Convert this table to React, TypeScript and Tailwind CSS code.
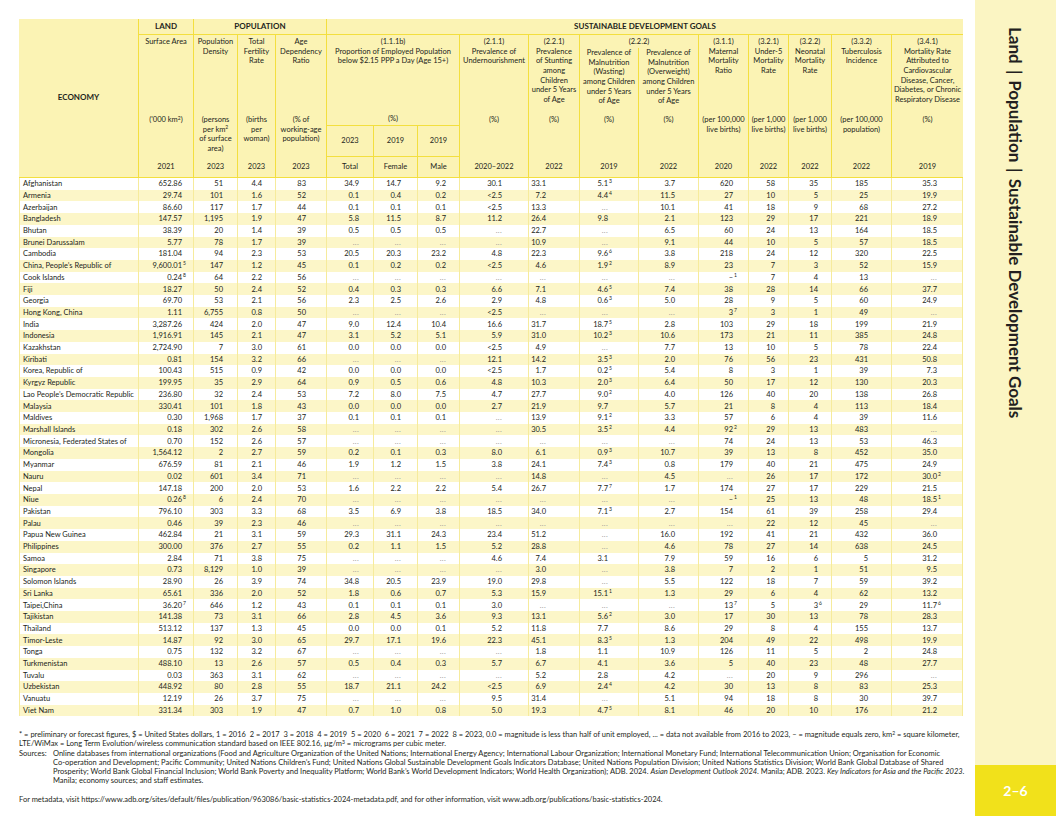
import React from "react";

const GRID =
  "grid grid-cols-[119px_55px_44px_38px_51px_47px_44px_42px_69px_51px_59px_60px_50px_40px_43px_60px_72px]";

const PR = [
  "pl-[3px] justify-start",
  "pr-[11px] justify-end",
  "pr-[14px] justify-end",
  "pr-[13px] justify-end",
  "pr-[20px] justify-end",
  "pr-[14px] justify-end",
  "pr-[16px] justify-end",
  "pr-[13px] justify-end",
  "pr-[26px] justify-end",
  "pr-[33px] justify-end",
  "pr-[30px] justify-end",
  "pr-[23px] justify-end",
  "pr-[15px] justify-end",
  "pr-[13px] justify-end",
  "pr-[13px] justify-end",
  "pr-[23px] justify-end",
  "pr-[25px] justify-end",
];

const E = "...";
const ROWS: string[][] = [
  ["Afghanistan", "652.86", "51", "4.4", "83", "34.9", "14.7", "9.2", "30.1", "33.1", "5.1^3", "3.7", "620", "58", "35", "185", "35.3"],
  ["Armenia", "29.74", "101", "1.6", "52", "0.1", "0.4", "0.2", "<2.5", "7.2", "4.4^4", "11.5", "27", "10", "5", "25", "19.9"],
  ["Azerbaijan", "86.60", "117", "1.7", "44", "0.1", "0.1", "0.1", "<2.5", "13.3", E, "10.1", "41", "18", "9", "68", "27.2"],
  ["Bangladesh", "147.57", "1,195", "1.9", "47", "5.8", "11.5", "8.7", "11.2", "26.4", "9.8", "2.1", "123", "29", "17", "221", "18.9"],
  ["Bhutan", "38.39", "20", "1.4", "39", "0.5", "0.5", "0.5", E, "22.7", E, "6.5", "60", "24", "13", "164", "18.5"],
  ["Brunei Darussalam", "5.77", "78", "1.7", "39", E, E, E, E, "10.9", E, "9.1", "44", "10", "5", "57", "18.5"],
  ["Cambodia", "181.04", "94", "2.3", "53", "20.5", "20.3", "23.2", "4.8", "22.3", "9.6^6", "3.8", "218", "24", "12", "320", "22.5"],
  ["China, People\u2019s Republic of", "9,600.01^5", "147", "1.2", "45", "0.1", "0.2", "0.2", "<2.5", "4.6", "1.9^2", "8.9", "23", "7", "3", "52", "15.9"],
  ["Cook Islands", "0.24^8", "64", "2.2", "56", E, E, E, E, E, E, E, "\u2013^1", "7", "4", "13", E],
  ["Fiji", "18.27", "50", "2.4", "52", "0.4", "0.3", "0.3", "6.6", "7.1", "4.6^5", "7.4", "38", "28", "14", "66", "37.7"],
  ["Georgia", "69.70", "53", "2.1", "56", "2.3", "2.5", "2.6", "2.9", "4.8", "0.6^3", "5.0", "28", "9", "5", "60", "24.9"],
  ["Hong Kong, China", "1.11", "6,755", "0.8", "50", E, E, E, "<2.5", E, E, E, "3^7", "3", "1", "49", E],
  ["India", "3,287.26", "424", "2.0", "47", "9.0", "12.4", "10.4", "16.6", "31.7", "18.7^5", "2.8", "103", "29", "18", "199", "21.9"],
  ["Indonesia", "1,916.91", "145", "2.1", "47", "3.1", "5.2", "5.1", "5.9", "31.0", "10.2^3", "10.6", "173", "21", "11", "385", "24.8"],
  ["Kazakhstan", "2,724.90", "7", "3.0", "61", "0.0", "0.0", "0.0", "<2.5", "4.9", E, "7.7", "13", "10", "5", "78", "22.4"],
  ["Kiribati", "0.81", "154", "3.2", "66", E, E, E, "12.1", "14.2", "3.5^3", "2.0", "76", "56", "23", "431", "50.8"],
  ["Korea, Republic of", "100.43", "515", "0.9", "42", "0.0", "0.0", "0.0", "<2.5", "1.7", "0.2^5", "5.4", "8", "3", "1", "39", "7.3"],
  ["Kyrgyz Republic", "199.95", "35", "2.9", "64", "0.9", "0.5", "0.6", "4.8", "10.3", "2.0^3", "6.4", "50", "17", "12", "130", "20.3"],
  ["Lao People\u2019s Democratic Republic", "236.80", "32", "2.4", "53", "7.2", "8.0", "7.5", "4.7", "27.7", "9.0^2", "4.0", "126", "40", "20", "138", "26.8"],
  ["Malaysia", "330.41", "101", "1.8", "43", "0.0", "0.0", "0.0", "2.7", "21.9", "9.7", "5.7", "21", "8", "4", "113", "18.4"],
  ["Maldives", "0.30", "1,968", "1.7", "37", "0.1", "0.1", "0.1", E, "13.9", "9.1^2", "3.3", "57", "6", "4", "39", "11.6"],
  ["Marshall Islands", "0.18", "302", "2.6", "58", E, E, E, E, "30.5", "3.5^2", "4.4", "92^2", "29", "13", "483", E],
  ["Micronesia, Federated States of", "0.70", "152", "2.6", "57", E, E, E, E, E, E, E, "74", "24", "13", "53", "46.3"],
  ["Mongolia", "1,564.12", "2", "2.7", "59", "0.2", "0.1", "0.3", "8.0", "6.1", "0.9^3", "10.7", "39", "13", "8", "452", "35.0"],
  ["Myanmar", "676.59", "81", "2.1", "46", "1.9", "1.2", "1.5", "3.8", "24.1", "7.4^3", "0.8", "179", "40", "21", "475", "24.9"],
  ["Nauru", "0.02", "601", "3.4", "71", E, E, E, E, "14.8", E, "4.5", E, "26", "17", "172", "30.0^2"],
  ["Nepal", "147.18", "200", "2.0", "53", "1.6", "2.2", "2.2", "5.4", "26.7", "7.7^7", "1.7", "174", "27", "17", "229", "21.5"],
  ["Niue", "0.26^8", "6", "2.4", "70", E, E, E, E, E, E, E, "\u2013^1", "25", "13", "48", "18.5^1"],
  ["Pakistan", "796.10", "303", "3.3", "68", "3.5", "6.9", "3.8", "18.5", "34.0", "7.1^3", "2.7", "154", "61", "39", "258", "29.4"],
  ["Palau", "0.46", "39", "2.3", "46", E, E, E, E, E, E, E, E, "22", "12", "45", E],
  ["Papua New Guinea", "462.84", "21", "3.1", "59", "29.3", "31.1", "24.3", "23.4", "51.2", E, "16.0", "192", "41", "21", "432", "36.0"],
  ["Philippines", "300.00", "376", "2.7", "55", "0.2", "1.1", "1.5", "5.2", "28.8", E, "4.6", "78", "27", "14", "638", "24.5"],
  ["Samoa", "2.84", "71", "3.8", "75", E, E, E, "4.6", "7.4", "3.1", "7.9", "59", "16", "6", "5", "31.2"],
  ["Singapore", "0.73", "8,129", "1.0", "39", E, E, E, E, "3.0", E, "3.8", "7", "2", "1", "51", "9.5"],
  ["Solomon Islands", "28.90", "26", "3.9", "74", "34.8", "20.5", "23.9", "19.0", "29.8", E, "5.5", "122", "18", "7", "59", "39.2"],
  ["Sri Lanka", "65.61", "336", "2.0", "52", "1.8", "0.6", "0.7", "5.3", "15.9", "15.1^1", "1.3", "29", "6", "4", "62", "13.2"],
  ["Taipei,China", "36.20^7", "646", "1.2", "43", "0.1", "0.1", "0.1", "3.0", E, E, E, "13^7", "5", "3^6", "29", "11.7^6"],
  ["Tajikistan", "141.38", "73", "3.1", "66", "2.8", "4.5", "3.6", "9.3", "13.1", "5.6^2", "3.0", "17", "30", "13", "78", "28.3"],
  ["Thailand", "513.12", "137", "1.3", "45", "0.0", "0.0", "0.1", "5.2", "11.8", "7.7", "8.6", "29", "8", "4", "155", "13.7"],
  ["Timor-Leste", "14.87", "92", "3.0", "65", "29.7", "17.1", "19.6", "22.3", "45.1", "8.3^5", "1.3", "204", "49", "22", "498", "19.9"],
  ["Tonga", "0.75", "132", "3.2", "67", E, E, E, E, "1.8", "1.1", "10.9", "126", "11", "5", "2", "24.8"],
  ["Turkmenistan", "488.10", "13", "2.6", "57", "0.5", "0.4", "0.3", "5.7", "6.7", "4.1", "3.6", "5", "40", "23", "48", "27.7"],
  ["Tuvalu", "0.03", "363", "3.1", "62", E, E, E, E, "5.2", "2.8", "4.2", E, "20", "9", "296", E],
  ["Uzbekistan", "448.92", "80", "2.8", "55", "18.7", "21.1", "24.2", "<2.5", "6.9", "2.4^4", "4.2", "30", "13", "8", "83", "25.3"],
  ["Vanuatu", "12.19", "26", "3.7", "75", E, E, E, "9.5", "31.4", E, "5.1", "94", "18", "8", "30", "39.7"],
  ["Viet Nam", "331.34", "303", "1.9", "47", "0.7", "1.0", "0.8", "5.0", "19.3", "4.7^5", "8.1", "46", "20", "10", "176", "21.2"],
];

function Val({ v }: { v: string }) {
  if (v === E) return <span className="text-[#9a9a9a] tracking-[0.3px]">...</span>;
  const [n, s] = v.split("^");
  return (
    <span className="relative">
      {n}
      {s && (
        <span className="absolute left-full top-[1px] pl-[1px] text-[5px] leading-none">{s}</span>
      )}
    </span>
  );
}

const HL = "border-[#f3df3f]";

type HCol = { c: string; title: React.ReactNode; units: React.ReactNode; year: string };

const GENERIC: HCol[] = [
  { c: "col-start-2", title: <>Surface Area</>, units: <>('000 km<sup className="text-[5px]">2</sup>)</>, year: "2021" },
  { c: "col-start-3", title: <>Population<br />Density</>, units: <>(persons<br />per km<sup className="text-[5px]">2</sup><br />of surface<br />area)</>, year: "2023" },
  { c: "col-start-4", title: <>Total<br />Fertility<br />Rate</>, units: <>(births<br />per<br />woman)</>, year: "2023" },
  { c: "col-start-5", title: <>Age<br />Dependency<br />Ratio</>, units: <>(% of<br />working-age<br />population)</>, year: "2023" },
  { c: "col-start-9", title: <>(2.1.1)<br />Prevalence of<br />Undernourishment</>, units: <>(%)</>, year: "2020\u20132022" },
  { c: "col-start-10", title: <>(2.2.1)<br />Prevalence<br />of Stunting<br />among<br />Children<br />under 5 Years<br />of Age</>, units: <>(%)</>, year: "2022" },
  { c: "col-start-13", title: <>(3.1.1)<br />Maternal<br />Mortality<br />Ratio</>, units: <>(per 100,000<br />live births)</>, year: "2020" },
  { c: "col-start-14", title: <>(3.2.1)<br />Under-5<br />Mortality<br />Rate</>, units: <>(per 1,000<br />live births)</>, year: "2022" },
  { c: "col-start-15", title: <>(3.2.2)<br />Neonatal<br />Mortality<br />Rate</>, units: <>(per 1,000<br />live births)</>, year: "2022" },
  { c: "col-start-16", title: <>(3.3.2)<br />Tuberculosis<br />Incidence</>, units: <>(per 100,000<br />population)</>, year: "2022" },
  { c: "col-start-17", title: <>(3.4.1)<br />Mortality Rate<br />Attributed to<br />Cardiovascular<br />Disease, Cancer,<br />Diabetes, or Chronic<br />Respiratory Disease</>, units: <>(%)</>, year: "2019" },
];

function Header() {
  return (
    <div
      className={`${GRID} grid-rows-[16px_13px_78px_31px_20px] bg-[#fbf3b4] text-[7.5px] leading-[9.67px] text-[#231f20] text-center border-b ${HL}`}
    >
      <div className="col-start-1 row-start-1 row-span-5 flex items-center justify-center font-bold text-[8px]">
        ECONOMY
      </div>
      <div className={`col-start-2 row-start-1 border-l border-b ${HL} flex items-center justify-center font-bold text-[8px]`}>
        LAND
      </div>
      <div className={`col-start-3 col-span-3 row-start-1 border-l border-b ${HL} flex items-center justify-center font-bold text-[8px]`}>
        POPULATION
      </div>
      <div className={`col-start-6 col-span-12 row-start-1 border-l border-b ${HL} flex items-center justify-center font-bold text-[8px]`}>
        SUSTAINABLE DEVELOPMENT GOALS
      </div>

      {GENERIC.map((g) => (
        <div key={g.c} className={`${g.c} row-start-2 row-span-4 border-l ${HL} flex flex-col whitespace-nowrap`}>
          <div className="h-[80px] pt-[2px]">{g.title}</div>
          <div>{g.units}</div>
          <div className="mt-auto h-[20px] flex items-center justify-center">{g.year}</div>
        </div>
      ))}

      {/* 1.1.1b */}
      <div className={`col-start-6 col-span-3 row-start-2 row-span-2 border-l border-b ${HL} flex flex-col whitespace-nowrap`}>
        <div className="pt-[2px]">
          (1.1.1b)
          <br />
          Proportion of Employed Population
          <br />
          below $2.15 PPP a Day (Age 15+)
        </div>
        <div className="mt-auto pb-[1px]">(%)</div>
      </div>
      <div className={`col-start-6 row-start-4 border-l border-b ${HL} flex items-center justify-center`}>2023</div>
      <div className={`col-start-7 row-start-4 border-l border-b ${HL} flex items-center justify-center`}>2019</div>
      <div className={`col-start-8 row-start-4 border-l border-b ${HL} flex items-center justify-center`}>2019</div>
      <div className={`col-start-6 row-start-5 border-l ${HL} flex items-center justify-center`}>Total</div>
      <div className={`col-start-7 row-start-5 border-l ${HL} flex items-center justify-center`}>Female</div>
      <div className={`col-start-8 row-start-5 border-l ${HL} flex items-center justify-center`}>Male</div>

      {/* 2.2.2 */}
      <div className={`col-start-11 col-span-2 row-start-2 border-l ${HL} pt-[2px]`}>(2.2.2)</div>
      <div className={`col-start-11 row-start-3 row-span-3 border-l ${HL} flex flex-col whitespace-nowrap`}>
        <div className="h-[67px]">
          Prevalence of<br />Malnutrition<br />(Wasting)<br />among Children<br />under 5 Years<br />of Age
        </div>
        <div>(%)</div>
        <div className="mt-auto h-[20px] flex items-center justify-center">2019</div>
      </div>
      <div className={`col-start-12 row-start-3 row-span-3 border-l ${HL} flex flex-col whitespace-nowrap`}>
        <div className="h-[67px]">
          Prevalence of<br />Malnutrition<br />(Overweight)<br />among Children<br />under 5 Years<br />of Age
        </div>
        <div>(%)</div>
        <div className="mt-auto h-[20px] flex items-center justify-center">2022</div>
      </div>
    </div>
  );
}

function Body() {
  return (
    <div className="text-[7.5px] text-[#231f20]">
      {ROWS.map((r, i) => (
        <div
          key={r[0]}
          className={`${GRID} h-[11.71px] ${i % 2 === 1 ? "bg-[#fcf6c8]" : "bg-white"}`}
        >
          {r.map((v, j) => (
            <div
              key={j}
              className={`flex items-center whitespace-nowrap border-l border-[#f6eb9c] ${PR[j]} ${j === 16 ? "border-r" : ""}`}
            >
              {j === 0 ? v : <Val v={v} />}
            </div>
          ))}
        </div>
      ))}
    </div>
  );
}

function Footer() {
  return (
    <div className="mt-[14px] text-[7.5px] leading-[9.1px] text-[#231f20]">
      <div className="whitespace-pre">
        * = preliminary or forecast figures, $ = United States dollars, 1 = 2016  2 = 2017  3 = 2018  4 = 2019  5 = 2020  6 = 2021  7 = 2022  8 = 2023, 0.0 = magnitude is less than half of unit employed, ... = data not available from 2016 to 2023, {"\u2013"} = magnitude equals zero, km<sup className="text-[5px]">2</sup> = square kilometer,
      </div>
      <div className="whitespace-pre">
        LTE/WiMax = Long Term Evolution/wireless communication standard based on IEEE 802.16, {"\u00b5"}g/m<sup className="text-[5px]">3</sup> = micrograms per cubic meter.
      </div>
      <div className="flex">
        <div className="w-[34px] shrink-0">Sources:</div>
        <div className="whitespace-nowrap">
          <div>
            Online databases from international organizations (Food and Agriculture Organization of the United Nations; International Energy Agency; International Labour Organization; International Monetary Fund; International Telecommunication Union; Organisation for Economic
          </div>
          <div>
            Co-operation and Development; Pacific Community; United Nations Children{"\u2019"}s Fund; United Nations Global Sustainable Development Goals Indicators Database; United Nations Population Division; United Nations Statistics Division; World Bank Global Database of Shared
          </div>
          <div>
            Prosperity; World Bank Global Financial Inclusion; World Bank Poverty and Inequality Platform; World Bank{"\u2019"}s World Development Indicators; World Health Organization); ADB. 2024. <i>Asian Development Outlook 2024</i>. Manila; ADB. 2023. <i>Key Indicators for Asia and the Pacific 2023</i>.
          </div>
          <div>Manila; economy sources; and staff estimates.</div>
        </div>
      </div>
      <div className="mt-[10px] whitespace-nowrap">
        For metadata, visit https://www.adb.org/sites/default/files/publication/963086/basic-statistics-2024-metadata.pdf, and for other information, visit www.adb.org/publications/basic-statistics-2024.
      </div>
    </div>
  );
}

export default function App() {
  return (
    <div className="w-[1056px] h-[816px] bg-white flex overflow-hidden font-['Lato',_'Open_Sans',_sans-serif]">
      <div className="w-[975px] shrink-0 pl-[19px] pt-[19px]">
        <div className="w-[944px]">
          <Header />
          <Body />
        </div>
        <Footer />
      </div>
      <div className="w-[81px] shrink-0 bg-[#fbf5c3] flex flex-col">
        <div className="flex-1 flex justify-center items-start pt-[27px]">
          <div className="[writing-mode:vertical-rl] font-bold text-[17px] text-[#231f20] whitespace-nowrap leading-none">
            Land<span className="mx-[6px]">|</span>Population<span className="mx-[6px]">|</span>Sustainable Development Goals
          </div>
        </div>
        <div className="h-[51px] bg-[#f1e11b] flex items-center justify-center text-white font-bold text-[14px]">
          2{"\u2013"}6
        </div>
      </div>
    </div>
  );
}
